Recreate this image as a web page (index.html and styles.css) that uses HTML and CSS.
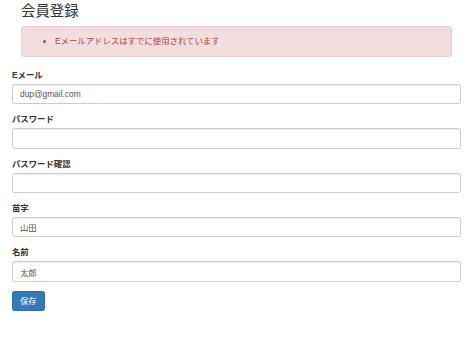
FILE: index.html
```html
<!doctype html>
<html lang="ja">
<head>
<meta charset="utf-8">
<meta name="viewport" content="width=device-width, initial-scale=1">
<title>会員登録</title>
<link rel="stylesheet" href="styles.css">
</head>
<body>

	<div class="container">

		<div class="head">
			<h3 class="title">会員登録</h3>
			<div class="alert">
				<ul>
					<li>Eメールアドレスはすでに使用されています</li>
				</ul>
			</div>
		</div>

		<form>
			<div class="group">
				<label for="email">Eメール</label>
				<input type="text" id="email" class="field" value="dup@gmail.com">
			</div>
			<div class="group">
				<label for="password">パスワード</label>
				<input type="password" id="password" class="field">
			</div>
			<div class="group">
				<label for="confirm">パスワード確認</label>
				<input type="password" id="confirm" class="field">
			</div>
			<div class="group">
				<label for="lastName">苗字</label>
				<input type="text" id="lastName" class="field" value="山田">
			</div>
			<div class="group">
				<label for="firstName">名前</label>
				<input type="text" id="firstName" class="field" value="太郎">
			</div>
			<button type="button" class="btn">保存</button>
		</form>

	</div>

</body>
</html>
```

FILE: styles.css
```css
	body { color: #333; font: 8.4px/12px "Liberation Sans", "Noto Sans CJK JP", sans-serif; margin: 0; }

	.container { margin: 0 10px 0 12px; }

	.head { margin: 0 9px; }
	.title { font-size: 14.4px; font-weight: normal; line-height: 16px; margin: 0; padding: 3px 0 7px 0; }

	.alert { background-color: #f2dede; border: 1px solid #ebccd1; border-radius: 3px; color: #a94442; margin-bottom: 12px; padding: 8.4px 9px; }
	.alert ul { margin: 0; padding-left: 24px; }

	.group { margin-bottom: 9px; }
	label { display: block; font-weight: bold; margin-bottom: 3px; }

	.field { background: #fff; border: 1px solid #ccc; border-radius: 2.4px; box-shadow: inset 0 1px 1px rgba(0,0,0,.075); box-sizing: border-box; color: #555; display: block; font: inherit; height: 20.4px; padding: 0 7px; width: 100%; }

	.btn { background-color: #337ab7; border: 1px solid #2e6da4; border-radius: 2.4px; color: #fff; cursor: pointer; font: inherit; height: 20.4px; padding: 0 7px; }
```
